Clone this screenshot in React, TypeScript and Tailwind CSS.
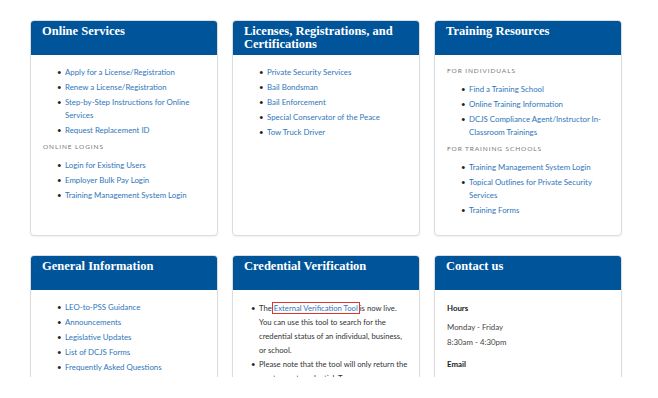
import type { ReactNode } from "react";

const SERIF = { fontFamily: "'Liberation Serif', serif" };

type Item = string | { text: string; red?: boolean };

function Card({ title, children }: { title: string; children: ReactNode }) {
  return (
    <div className="flex flex-col rounded-[4px] border border-[#dcdcdc] bg-white overflow-hidden shadow-[0_1px_2px_rgba(0,0,0,0.06)]">
      <div className="h-[34px] shrink-0 bg-[#00549a] px-[11px] pt-[4px]">
        <h2
          className="text-[12.5px] leading-[13px] font-bold text-white"
          style={SERIF}
        >
          {title}
        </h2>
      </div>
      <div className="flex-1 pl-[12px] pr-[8px] pt-[11px] pb-[18px]">{children}</div>
    </div>
  );
}

function Label({ children, first }: { children: ReactNode; first?: boolean }) {
  return (
    <div
      className={`text-[6.5px] leading-[10px] uppercase tracking-[0.14em] text-[#777] ${
        first ? "mb-[7px]" : "mt-[5px] mb-[7px]"
      }`}
    >
      {children}
    </div>
  );
}

function Links({ items }: { items: Item[] }) {
  return (
    <ul className="flex flex-col gap-[2px] pl-[14px]">
      {items.map((it) => (
        <li key={typeof it === "string" ? it : it.text} className="flex gap-[5px] text-[7.85px] leading-[13px]">
          <span className="w-[3px] shrink-0 text-[#222]">•</span>
          <a href="#" className="text-[#2f76bb]">
            {typeof it === "string" ? it : it.text}
          </a>
        </li>
      ))}
    </ul>
  );
}

export default function App() {
  return (
    <div
      className="h-[377px] overflow-hidden bg-white pl-[30px] pt-[20px]"
      style={{ fontFamily: "Lato, 'Liberation Sans', sans-serif" }}
    >
      <div className="grid w-[592px] grid-cols-3 gap-x-[14px] gap-y-[19px]">
        <Card title="Online Services">
          <Links
            items={[
              "Apply for a License/Registration",
              "Renew a License/Registration",
              "Step-by-Step Instructions for Online Services",
              "Request Replacement ID",
            ]}
          />
          <Label>Online Logins</Label>
          <Links
            items={[
              "Login for Existing Users",
              "Employer Bulk Pay Login",
              "Training Management System Login",
            ]}
          />
        </Card>

        <Card title="Licenses, Registrations, and Certifications">
          <Links
            items={[
              "Private Security Services",
              "Bail Bondsman",
              "Bail Enforcement",
              "Special Conservator of the Peace",
              "Tow Truck Driver",
            ]}
          />
        </Card>

        <Card title="Training Resources">
          <Label first>For Individuals</Label>
          <Links
            items={[
              "Find a Training School",
              "Online Training Information",
              "DCJS Compliance Agent/Instructor In-Classroom Trainings",
            ]}
          />
          <Label>For Training Schools</Label>
          <Links
            items={[
              "Training Management System Login",
              "Topical Outlines for Private Security Services",
              "Training Forms",
            ]}
          />
        </Card>

        <Card title="General Information">
          <Links
            items={[
              "LEO-to-PSS Guidance",
              "Announcements",
              "Legislative Updates",
              "List of DCJS Forms",
              "Frequently Asked Questions",
            ]}
          />
        </Card>

        <Card title="Credential Verification">
          <ul className="flex flex-col pl-[6px] pr-[3px] text-[7.7px] leading-[14px] text-[#333]">
            <li className="flex gap-[5px]">
              <span className="w-[3px] shrink-0 text-[#222]">•</span>
              <span>
                The
                <a href="#" className="border border-[#e0322e] px-[1px] text-[#2f76bb]">
                  External Verification Tool
                </a>
                is now live. You can use this tool to search for the credential status of an
                individual, business, or school.
              </span>
            </li>
            <li className="flex gap-[5px]">
              <span className="w-[3px] shrink-0 text-[#222]">•</span>
              <span>
                Please note that the tool will only return the most recent credential. Temporary
                registrations are not displayed.
              </span>
            </li>
          </ul>
        </Card>

        <Card title="Contact us">
          <div className="text-[7.85px] leading-[15px] text-[#444]">
            <div className="font-bold text-[#1a1a1a]">Hours</div>
            <div className="mt-[4px]">Monday - Friday</div>
            <div>8:30am - 4:30pm</div>
            <div className="mt-[7px] font-bold text-[#1a1a1a]">Email</div>
            <div className="mt-[4px] text-[#2f76bb]">pss@dcjs.virginia.gov</div>
          </div>
        </Card>
      </div>
    </div>
  );
}
